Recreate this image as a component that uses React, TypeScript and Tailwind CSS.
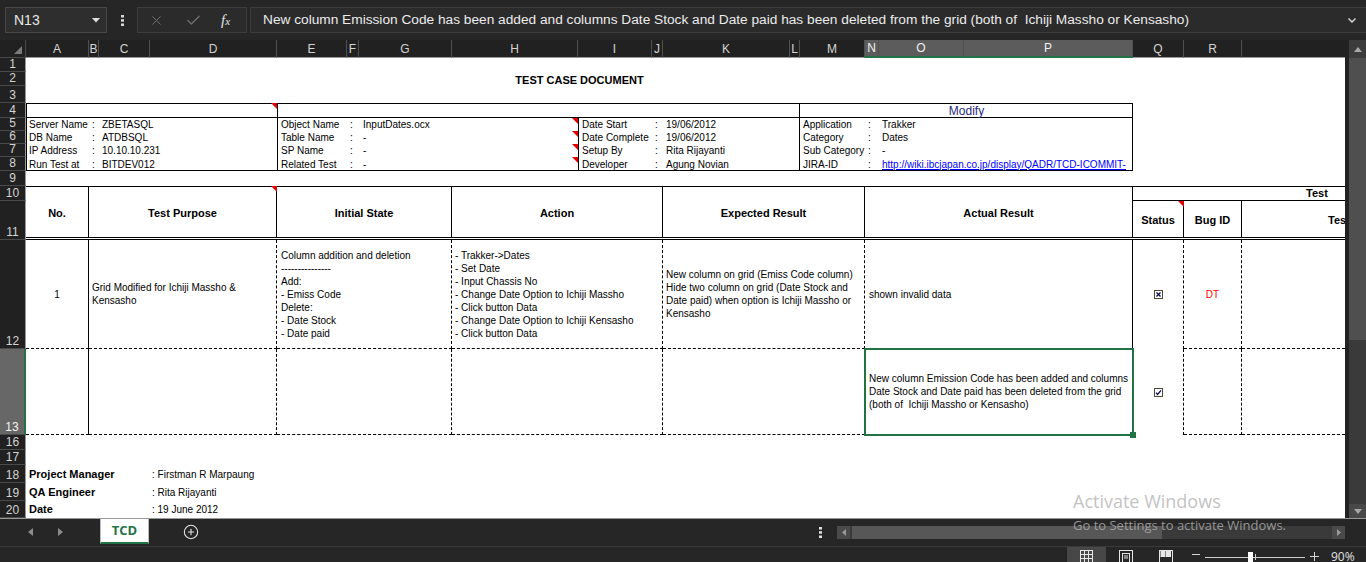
import { X, Check, CirclePlus } from 'lucide-react';

const HEADER_COLS = [
  { label: 'A', cls: 'col-start-2', sel: false },
  { label: 'B', cls: 'col-start-3', sel: false },
  { label: 'C', cls: 'col-start-4', sel: false },
  { label: 'D', cls: 'col-start-5', sel: false },
  { label: 'E', cls: 'col-start-6', sel: false },
  { label: 'F', cls: 'col-start-7', sel: false },
  { label: 'G', cls: 'col-start-8', sel: false },
  { label: 'H', cls: 'col-start-9', sel: false },
  { label: 'I', cls: 'col-start-10', sel: false },
  { label: 'J', cls: 'col-start-11', sel: false },
  { label: 'K', cls: 'col-start-12', sel: false },
  { label: 'L', cls: 'col-start-13', sel: false },
  { label: 'M', cls: 'col-start-14', sel: false },
  { label: 'N', cls: 'col-start-15', sel: true },
  { label: 'O', cls: 'col-start-16', sel: true },
  { label: 'P', cls: 'col-start-17', sel: true },
  { label: 'Q', cls: 'col-start-18', sel: false },
  { label: 'R', cls: 'col-start-19', sel: false },
  { label: '', cls: 'col-start-20', sel: false },
];

const ROW_HEADERS = [
  { n: 1, cls: 'row-start-2' },
  { n: 2, cls: 'row-start-3' },
  { n: 3, cls: 'row-start-4' },
  { n: 4, cls: 'row-start-5' },
  { n: 5, cls: 'row-start-6' },
  { n: 6, cls: 'row-start-7' },
  { n: 7, cls: 'row-start-8' },
  { n: 8, cls: 'row-start-9' },
  { n: 9, cls: 'row-start-10' },
  { n: 10, cls: 'row-start-11' },
  { n: 11, cls: 'row-start-12' },
  { n: 12, cls: 'row-start-13' },
  { n: 13, cls: 'row-start-14' },
  { n: 16, cls: 'row-start-15' },
  { n: 17, cls: 'row-start-16' },
  { n: 18, cls: 'row-start-17' },
  { n: 19, cls: 'row-start-18' },
  { n: 20, cls: 'row-start-19' },
];

const INFO_ROWS = ['row-start-6', 'row-start-7', 'row-start-8', 'row-start-9'];

const INFO_BLOCKS = [
  {
    labelCls: 'col-start-2 pl-[3px]',
    colonCls: 'col-start-3 pl-[3px]',
    valueCls: 'col-start-4 col-end-6 pl-[3px]',
    rows: [['Server Name', 'ZBETASQL'], ['DB Name', 'ATDBSQL'], ['IP Address', '10.10.10.231'], ['Run Test at', 'BITDEV012']],
  },
  {
    labelCls: 'col-start-6 pl-1',
    colonCls: 'col-start-7 pl-[3px]',
    valueCls: 'col-start-8 col-end-10 pl-1',
    rows: [['Object Name', 'InputDates.ocx'], ['Table Name', '-'], ['SP Name', '-'], ['Related Test', '-']],
  },
  {
    labelCls: 'col-start-10 pl-1',
    colonCls: 'col-start-11 pl-[3px]',
    valueCls: 'col-start-12 col-end-14 pl-[3px]',
    rows: [['Date Start', '19/06/2012'], ['Date Complete', '19/06/2012'], ['Setup By', 'Rita Rijayanti'], ['Developer', 'Agung Novian']],
  },
  {
    labelCls: 'col-start-14 pl-[3px]',
    colonCls: 'col-start-15 pl-[3px]',
    valueCls: 'col-start-16 col-end-18 pl-[3px] overflow-hidden',
    rows: [['Application', 'Trakker'], ['Category', 'Dates'], ['Sub Category', '-'], ['JIRA-ID', '']],
  },
];

const COMMENT = 'w-[6px] h-[6px] justify-self-end self-start bg-[#e00000] [clip-path:polygon(0_0,100%_0,100%_100%)]';

function CheckBox({ kind }: { kind: 'x' | 'check' }) {
  return (
    <svg width="9" height="9" viewBox="0 0 9 9">
      <rect x="0.5" y="0.5" width="8" height="8" fill="#fff" stroke="#4a4a3a" />
      {kind === 'x' ? (
        <path d="M2.5 2.5l4 4M6.5 2.5l-4 4" stroke="#10105a" strokeWidth="1.4" />
      ) : (
        <path d="M2 4.6l1.6 1.8L7 2.4" stroke="#10105a" strokeWidth="1.4" fill="none" />
      )}
    </svg>
  );
}

function Lines({ lines }: { lines: string[] }) {
  return (
    <>
      {lines.map((l, i) => (
        <div key={i} className="whitespace-pre">{l}</div>
      ))}
    </>
  );
}

function TopBar() {
  return (
    <div className="flex h-10 items-center bg-[#262626] font-['Liberation_Sans',Arial,sans-serif]">
      <div className="ml-[5px] flex h-[26px] w-[102px] items-center justify-between border border-[#474747] bg-[#2e2e2e] pl-[8px] pr-[6px] text-[14px] text-[#e6e6e6]">
        <span>N13</span>
        <svg width="8" height="5" viewBox="0 0 8 5"><path d="M0 0h8L4 4.5z" fill="#e0e0e0" /></svg>
      </div>
      <div className="flex w-[30px] justify-center">
        <svg width="3" height="11" viewBox="0 0 3 11" fill="#d8d8d8">
          <rect x="0" y="0" width="3" height="2.5" />
          <rect x="0" y="4.2" width="3" height="2.5" />
          <rect x="0" y="8.5" width="3" height="2.5" />
        </svg>
      </div>
      <div className="flex h-[26px] w-[110px] items-center border border-[#3c3c3c] bg-[#2b2b2b]">
        <X size={15} strokeWidth={1.6} className="ml-[11px] text-[#707070]" />
        <Check size={17} strokeWidth={1.8} className="ml-[21px] text-[#707070]" />
        <span className="ml-[19px] font-['Liberation_Serif',serif] text-[15px] italic text-[#e6e6e6]">
          f<span className="text-[11px]">x</span>
        </span>
      </div>
      <div className="ml-[3px] flex h-[26px] flex-1 items-center justify-between border border-[#3c3c3c] border-r-0 bg-[#2b2b2b] pl-[12px] pr-[10px] text-[13.7px] text-[#ececec]">
        <span className="whitespace-pre">New column Emission Code has been added and columns Date Stock and Date paid has been deleted from the grid (both of  Ichiji Massho or Kensasho)</span>
        <svg width="8" height="5" viewBox="0 0 8 5"><path d="M0.5 0.5L4 4l3.5-3.5" stroke="#e0e0e0" strokeWidth="1.3" fill="none" /></svg>
      </div>
    </div>
  );
}

function Sheet() {
  return (
    <div className="grid h-[478px] w-[1345px] grid-cols-[26px_63px_10px_51px_127px_70px_12px_93px_126px_74px_11px_127px_10px_65px_14px_85px_169px_51px_58px_1fr] grid-rows-[18px_14px_14px_17px_15px_13px_13px_13px_14px_15px_15px_39px_109px_86px_15px_15px_18px_18px_17px] overflow-hidden bg-white font-['Liberation_Sans',Arial,sans-serif] text-[10px] text-black">
      {/* corner */}
      <div className="col-start-1 row-start-1 flex items-end justify-end border-r border-b border-[#4a4a4a] bg-[#212121] pr-[3px] pb-[3px]">
        <div className="h-[8px] w-[8px] bg-[#7a7a7a] [clip-path:polygon(100%_0,100%_100%,0_100%)]" />
      </div>
      {HEADER_COLS.map((h) => (
        <div
          key={h.cls}
          className={`${h.cls} row-start-1 flex items-center justify-center border-r border-[#505050] text-[12px] ${
            h.sel ? 'border-b-2 border-b-[#217346] bg-[#5c5c5c] text-[#f0f0f0]' : 'border-b border-b-[#9a9a9a] bg-[#212121] text-[#d4d4d4]'
          }`}
        >
          {h.label}
        </div>
      ))}
      {ROW_HEADERS.map((r) => (
        <div
          key={r.n}
          className={`col-start-1 ${r.cls} flex items-end justify-center border-b border-[#4a4a4a] text-[12px] leading-[13px] ${
            r.n === 13 ? 'border-r-2 border-r-[#217346] bg-[#676767] text-[#f4f4f4]' : 'border-r border-r-[#9a9a9a] bg-[#212121] text-[#d4d4d4]'
          }`}
        >
          {r.n}
        </div>
      ))}

      {/* title */}
      <div className="col-start-2 col-end-18 row-start-3 flex items-center justify-center pt-[3px] text-[11px] font-bold">TEST CASE DOCUMENT</div>

      {/* info block borders */}
      <div className="col-start-2 col-end-18 row-start-5 row-end-10 border border-black" />
      <div className="col-start-2 col-end-18 row-start-5 border-b border-black" />
      <div className="col-start-6 col-end-14 row-start-5 row-end-10 border-x border-black" />
      <div className="col-start-10 col-end-14 row-start-6 row-end-10 border-l border-black" />
      <div className="col-start-14 col-end-18 row-start-5 flex items-center justify-center text-[12px] text-[#28287e]">Modify</div>

      {INFO_BLOCKS.map((b, bi) =>
        b.rows.map(([label, value], ri) => (
          <div key={`${bi}-${ri}`} className="contents">
            <div className={`${b.labelCls} ${INFO_ROWS[ri]} flex items-center whitespace-nowrap`}>{label}</div>
            <div className={`${b.colonCls} ${INFO_ROWS[ri]} flex items-center`}>:</div>
            <div className={`${b.valueCls} ${INFO_ROWS[ri]} flex items-center whitespace-nowrap`}>
              {bi === 3 && ri === 3 ? (
                <span className="text-[#0000ff] underline">http://wiki.ibcjapan.co.jp/display/QADR/TCD-ICOMMIT-</span>
              ) : (
                value
              )}
            </div>
          </div>
        ))
      )}

      {/* comments */}
      <div className={`col-start-5 row-start-5 ${COMMENT}`} />
      <div className={`col-start-9 row-start-6 ${COMMENT}`} />
      <div className={`col-start-9 row-start-7 ${COMMENT}`} />
      <div className={`col-start-9 row-start-8 ${COMMENT}`} />
      <div className={`col-start-9 row-start-9 ${COMMENT}`} />

      {/* table header */}
      <div className="col-start-2 col-end-21 row-start-11 border-t border-black" />
      <div className="col-start-2 col-end-3 row-start-11 row-end-13 flex items-center justify-center border-r border-black text-[11px] font-bold">No.</div>
      <div className="col-start-3 col-end-6 row-start-11 row-end-13 flex items-center justify-center border-r border-black text-[11px] font-bold">Test Purpose</div>
      <div className="col-start-6 col-end-9 row-start-11 row-end-13 flex items-center justify-center border-r border-black text-[11px] font-bold">Initial State</div>
      <div className="col-start-9 col-end-12 row-start-11 row-end-13 flex items-center justify-center border-r border-black text-[11px] font-bold">Action</div>
      <div className="col-start-12 col-end-15 row-start-11 row-end-13 flex items-center justify-center border-r border-black text-[11px] font-bold">Expected Result</div>
      <div className="col-start-15 col-end-18 row-start-11 row-end-13 flex items-center justify-center border-r border-black text-[11px] font-bold">Actual Result</div>
      <div className="col-start-18 col-end-21 row-start-11 flex items-center border-b border-black pl-[173px] text-[11px] font-bold">Test</div>
      <div className="col-start-18 row-start-12 flex items-center justify-center border-r border-black text-[11px] font-bold">Status</div>
      <div className="col-start-19 row-start-12 flex items-center justify-center border-r border-black text-[11px] font-bold">Bug ID</div>
      <div className="col-start-20 row-start-12 flex items-center whitespace-nowrap pl-[86px] text-[11px] font-bold">Tester</div>
      <div className={`col-start-5 row-start-11 ${COMMENT}`} />
      <div className={`col-start-18 row-start-12 ${COMMENT}`} />
      <div className="col-start-2 col-end-21 row-start-12 h-[3px] self-end border-y border-black bg-white" />

      {/* row 12 */}
      <div className="col-start-2 row-start-13 flex items-center justify-center border-r border-b border-black [border-bottom-style:dashed]">1</div>
      <div className="col-start-3 col-end-6 row-start-13 flex flex-col justify-center border-r border-b border-dashed border-black pl-[3px] leading-[13px]">
        <Lines lines={['Grid Modified for Ichiji Massho &', 'Kensasho']} />
      </div>
      <div className="col-start-6 col-end-9 row-start-13 flex flex-col justify-center border-r border-b border-dashed border-black pl-1 leading-[13px]">
        <Lines lines={['Column addition and deletion', '---------------', 'Add:', '- Emiss Code', 'Delete:', '- Date Stock', '- Date paid']} />
      </div>
      <div className="col-start-9 col-end-12 row-start-13 flex flex-col justify-center border-r border-b border-dashed border-black pl-[3px] leading-[13px]">
        <Lines
          lines={[
            '- Trakker->Dates',
            '- Set Date',
            '- Input Chassis No',
            '- Change Date Option to Ichiji Massho',
            '- Click button Data',
            '- Change Date Option to Ichiji Kensasho',
            '- Click button Data',
          ]}
        />
      </div>
      <div className="col-start-12 col-end-15 row-start-13 flex flex-col justify-center border-r border-b border-dashed border-black pl-[3px] leading-[13px]">
        <Lines
          lines={[
            'New column on grid (Emiss Code column)',
            'Hide two column on grid (Date Stock and',
            'Date paid) when option is Ichiji Massho or',
            'Kensasho',
          ]}
        />
      </div>
      <div className="col-start-15 col-end-18 row-start-13 flex items-center border-r border-b border-black pl-1 [border-bottom-style:dashed]">shown invalid data</div>
      <div className="col-start-18 row-start-13 flex items-center justify-center border-r border-dashed border-black">
        <CheckBox kind="x" />
      </div>
      <div className="col-start-19 row-start-13 flex items-center justify-center border-r border-b border-dashed border-black text-[#ff0000]">DT</div>
      <div className="col-start-20 row-start-13 border-b border-dashed border-black" />

      {/* row 13 */}
      <div className="col-start-2 row-start-14 border-r border-b border-black [border-bottom-style:dashed]" />
      <div className="col-start-3 col-end-6 row-start-14 border-r border-b border-dashed border-black" />
      <div className="col-start-6 col-end-9 row-start-14 border-r border-b border-dashed border-black" />
      <div className="col-start-9 col-end-12 row-start-14 border-r border-b border-dashed border-black" />
      <div className="col-start-12 col-end-15 row-start-14 border-r border-b border-dashed border-black" />
      <div className="col-start-15 col-end-18 row-start-14 flex flex-col justify-center border-b border-dashed border-black pl-1 leading-[13px]">
        <Lines
          lines={[
            'New column Emission Code has been added and columns',
            'Date Stock and Date paid has been deleted from the grid',
            '(both of  Ichiji Massho or Kensasho)',
          ]}
        />
      </div>
      <div className="col-start-18 row-start-14 flex items-center justify-center border-r border-dashed border-black">
        <CheckBox kind="check" />
      </div>
      <div className="col-start-19 row-start-14 border-r border-b border-dashed border-black" />
      <div className="col-start-20 row-start-14 border-b border-dashed border-black" />
      <div className="relative col-start-15 col-end-18 row-start-14 -m-px border-2 border-[#217346]">
        <div className="absolute -right-[4px] -bottom-[4px] h-[6px] w-[6px] bg-[#217346]" />
      </div>

      {/* sign-off */}
      <div className="col-start-2 col-end-5 row-start-17 flex items-center whitespace-nowrap pl-[3px] text-[11px] font-bold">Project Manager</div>
      <div className="col-start-5 col-end-9 row-start-17 flex items-center whitespace-nowrap pl-[2px]">: Firstman R Marpaung</div>
      <div className="col-start-2 col-end-5 row-start-18 flex items-center whitespace-nowrap pl-[3px] text-[11px] font-bold">QA Engineer</div>
      <div className="col-start-5 col-end-9 row-start-18 flex items-center whitespace-nowrap pl-[2px]">: Rita Rijayanti</div>
      <div className="col-start-2 col-end-5 row-start-19 flex items-center whitespace-nowrap pl-[3px] text-[11px] font-bold">Date</div>
      <div className="col-start-5 col-end-9 row-start-19 flex items-center whitespace-nowrap pl-[2px]">: 19 June 2012</div>
    </div>
  );
}

function VScroll() {
  return (
    <div className="flex h-[478px] w-[21px] flex-col bg-[#222222] pl-[4px]">
      <div className="flex h-[18px] items-center justify-center bg-[#3c3c3c]">
        <svg width="8" height="5" viewBox="0 0 8 5"><path d="M0 5h8L4 0z" fill="#a8a8a8" /></svg>
      </div>
      <div className="h-[282px] bg-[#4f4f4f]" />
      <div className="flex-1 bg-[#3a3a3a]" />
      <div className="flex h-[14px] items-center justify-center bg-[#484848]">
        <svg width="8" height="5" viewBox="0 0 8 5"><path d="M0 0h8L4 5z" fill="#a8a8a8" /></svg>
      </div>
    </div>
  );
}

function TabBar() {
  return (
    <div className="flex h-[28px] items-start border-t border-[#9a9a9a] bg-[#262626] font-['Open_Sans',sans-serif]">
      <div className="flex h-[26px] w-[100px] items-center gap-[25px] pl-[28px]">
        <svg width="5" height="8" viewBox="0 0 5 8"><path d="M5 0v8L0 4z" fill="#8c8c8c" /></svg>
        <svg width="5" height="8" viewBox="0 0 5 8"><path d="M0 0v8l5-4z" fill="#8c8c8c" /></svg>
      </div>
      <div className="flex h-[25px] w-[49px] items-center justify-center border-x border-b-2 border-x-[#bdbdbd] border-b-[#217346] bg-white text-[13px] font-bold text-[#217346]">
        TCD
      </div>
      <div className="flex h-[26px] w-[84px] items-center justify-center">
        <CirclePlus size={16} strokeWidth={1.6} className="text-[#e6e6e6]" />
      </div>
      <div className="flex-1" />
      <div className="flex h-[26px] w-[20px] items-center justify-center">
        <svg width="3" height="11" viewBox="0 0 3 11" fill="#e0e0e0">
          <rect x="0" y="0" width="3" height="2.5" />
          <rect x="0" y="4.2" width="3" height="2.5" />
          <rect x="0" y="8.5" width="3" height="2.5" />
        </svg>
      </div>
      <div className="ml-[7px] mt-[7px] flex h-[13px] w-[508px] bg-[#3a3a3a]">
        <div className="flex w-[13px] items-center justify-center bg-[#4a4a4a]">
          <svg width="4" height="7" viewBox="0 0 4 7"><path d="M4 0v7L0 3.5z" fill="#9a9a9a" /></svg>
        </div>
        <div className="ml-[2px] w-[310px] bg-[#575757]" />
        <div className="flex-1" />
        <div className="flex w-[13px] items-center justify-center bg-[#4a4a4a]">
          <svg width="4" height="7" viewBox="0 0 4 7"><path d="M0 0v7l4-3.5z" fill="#9a9a9a" /></svg>
        </div>
      </div>
      <div className="w-[21px]" />
    </div>
  );
}

function StatusBar() {
  return (
    <div className="flex h-[16px] items-start justify-end overflow-hidden border-t border-[#3a3a3a] bg-[#262626] font-['Open_Sans',sans-serif] text-[#e0e0e0]">
      <div className="flex h-full w-[39px] justify-center bg-[#474747] pt-[3px]">
        <svg width="13" height="13" viewBox="0 0 13 13" fill="none" stroke="#e6e6e6">
          <rect x="0.5" y="0.5" width="12" height="12" />
          <path d="M4.5 0v13M8.5 0v13M0 4.5h13M0 8.5h13" />
        </svg>
      </div>
      <div className="flex h-full w-[40px] justify-center pt-[3px]">
        <svg width="14" height="13" viewBox="0 0 14 13" fill="none" stroke="#e6e6e6">
          <rect x="0.5" y="0.5" width="13" height="12" />
          <rect x="3.5" y="3.5" width="7" height="9" />
          <path d="M5 6h4M5 8h4" />
        </svg>
      </div>
      <div className="flex h-full w-[40px] justify-center pt-[3px]">
        <svg width="14" height="13" viewBox="0 0 14 13" fill="none" stroke="#e6e6e6">
          <rect x="0.5" y="0.5" width="13" height="12" />
          <rect x="2" y="0.5" width="4" height="6" fill="#e6e6e6" />
          <rect x="7.5" y="0.5" width="4" height="6" fill="#e6e6e6" />
        </svg>
      </div>
      <div className="flex h-full w-[19px] justify-center pt-[7px]">
        <div className="h-px w-[8px] bg-[#d6d6d6]" />
      </div>
      <div className="relative h-full w-[100px]">
        <div className="mt-[10px] h-px w-full bg-[#d0d0d0]" />
        <div className="absolute top-[5px] left-[43px] h-[11px] w-[5px] bg-white" />
        <div className="absolute top-[7px] left-[50px] h-[6px] w-px bg-[#d0d0d0]" />
      </div>
      <div className="flex h-full w-[18px] justify-center pt-[5px]">
        <svg width="9" height="9" viewBox="0 0 9 9" stroke="#d6d6d6"><path d="M4.5 0v9M0 4.5h9" /></svg>
      </div>
      <div className="w-[43px] pl-[8px] text-[12px] leading-[20px]">90%</div>
    </div>
  );
}

export default function App() {
  return (
    <div className="relative h-[562px] w-[1366px] overflow-hidden bg-[#262626]">
      <TopBar />
      <div className="flex">
        <Sheet />
        <VScroll />
      </div>
      <TabBar />
      <StatusBar />
      <div className="pointer-events-none absolute top-[489px] left-[1073px] font-['Open_Sans',sans-serif] text-[rgba(178,178,178,0.8)]">
        <div className="text-[18px] leading-[24px]">Activate Windows</div>
        <div className="mt-[3px] text-[13px] leading-[18px]">Go to Settings to activate Windows.</div>
      </div>
    </div>
  );
}
